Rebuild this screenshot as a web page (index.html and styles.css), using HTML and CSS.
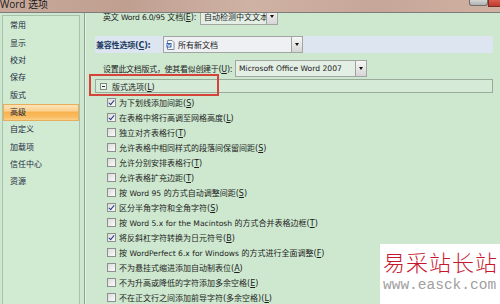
FILE: index.html
```html
<!DOCTYPE html>
<html lang="en">
<head>
    <meta charset="UTF-8">
    <title>Word 选项</title>
    <link rel="stylesheet" href="styles.css">
</head>
<body>
    <div class="window">
        <div class="titlebar">
            <span class="title">Word 选项</span>
            <div class="caption-btns">
                <span class="help-btn"></span>
                <span class="close-btn"></span>
            </div>
        </div>

        <div class="body">
            <ul class="nav">
                <li>常用</li>
                <li>显示</li>
                <li>校对</li>
                <li>保存</li>
                <li>版式</li>
                <li class="active">高级</li>
                <li>自定义</li>
                <li>加载项</li>
                <li>信任中心</li>
                <li>资源</li>
            </ul>

            <div class="main">
                <div class="row row-clip">
                    <span class="label">英文 <span class="en">Word 6.0/95</span> 文档(<u>E</u>):</span>
                    <div class="combo combo-short">
                        <span class="value">自动检测中文文本</span>
                        <span class="drop"></span>
                    </div>
                </div>

                <div class="row band">
                    <span class="label">兼容性选项(<u>C</u>):</span>
                    <div class="combo combo-doc">
                        <svg class="doc-icon" width="9" height="10" viewBox="0 0 9 10">
                            <path d="M1.5 0.5 H6 L8 2.5 V9.5 H1.5 Z" fill="#fdfdfd" stroke="#7b8799"/>
                            <rect x="0.5" y="3" width="5" height="4.5" fill="#2f5fae"/>
                            <path d="M1.5 4 L2.3 6.6 L3 4.8 L3.7 6.6 L4.5 4" stroke="#fff" stroke-width="0.7" fill="none"/>
                        </svg>
                        <span class="value">所有新文档</span>
                        <span class="drop"></span>
                    </div>
                </div>

                <div class="row row-set">
                    <span class="label">设置此文档版式，使其看似创建于(<u>U</u>):</span>
                    <div class="combo combo-wide">
                        <span class="value en">Microsoft Office Word 2007</span>
                        <span class="drop"></span>
                    </div>
                </div>

                <div class="section">
                    <span class="collapse"></span>
                    <span>版式选项(<u>L</u>)</span>
                </div>

                <ul class="checks">
                    <li><span class="box on"></span><span>为下划线添加间距(<u>S</u>)</span></li>
                    <li><span class="box on"></span><span>在表格中将行高调至网格高度(<u>L</u>)</span></li>
                    <li><span class="box"></span><span>独立对齐表格行(<u>T</u>)</span></li>
                    <li><span class="box"></span><span>允许表格中相同样式的段落间保留间距(<u>S</u>)</span></li>
                    <li><span class="box"></span><span>允许分别安排表格行(<u>T</u>)</span></li>
                    <li><span class="box"></span><span>允许表格扩充边距(<u>T</u>)</span></li>
                    <li><span class="box"></span><span>按 <span class="en">Word 95</span> 的方式自动调整间距(<u>S</u>)</span></li>
                    <li><span class="box on"></span><span>区分半角字符和全角字符(<u>S</u>)</span></li>
                    <li><span class="box"></span><span>按 <span class="en">Word 5.x for the Macintosh</span> 的方式合并表格边框(<u>T</u>)</span></li>
                    <li><span class="box on"></span><span>将反斜杠字符转换为日元符号(<u>B</u>)</span></li>
                    <li><span class="box"></span><span>按 <span class="en">WordPerfect 6.x for Windows</span> 的方式进行全面调整(<u>F</u>)</span></li>
                    <li><span class="box"></span><span>不为悬挂式缩进添加自动制表位(<u>A</u>)</span></li>
                    <li><span class="box"></span><span>不为升高或降低的字符添加多余空格(<u>E</u>)</span></li>
                    <li><span class="box"></span><span>不在正文行之间添加前导字符(多余空格)(<u>L</u>)</span></li>
                </ul>
            </div>
        </div>

        <div class="highlight"></div>

        <div class="mark">
            <div class="mark-cn">易采站长站</div>
            <div class="mark-url">www.easck.com</div>
        </div>
    </div>
</body>
</html>
```

FILE: styles.css
```css
* { box-sizing: border-box; }
body { margin: 0; width: 500px; height: 304px; overflow: hidden; font-family: "DejaVu Sans", "Noto Sans CJK SC", sans-serif; font-size: 8px; color: #1d1d1d; background: #cde8cf; }
u { text-decoration-thickness: 1px; text-underline-offset: 1px; }
.en { font-size: 7.6px; }

.window { position: relative; width: 500px; height: 304px; display: flex; flex-direction: column; }

.titlebar { height: 13px; flex-shrink: 0; display: flex; justify-content: space-between; align-items: flex-start; border-bottom: 1px solid #7d7d7d; background: linear-gradient(90deg, #c8a99a, #c09f91 25%, #cfb2a4 50%, #c6a698 75%, #d0b0a1); }
.title { font-family: "Open Sans", "Noto Sans CJK SC", sans-serif; font-size: 10px; line-height: 8px; color: #1a1a1a; }
.caption-btns { display: flex; margin-right: -1px; }
.help-btn { width: 19px; height: 6px; border: 1px solid #6e6e6e; border-top: none; border-radius: 0 0 3px 3px; background: linear-gradient(#d4d4d4, #b2b2b2); }
.close-btn { width: 13px; height: 7px; border: 1px solid #7a3028; border-top: none; background: linear-gradient(#d95c4c, #c03a2c); }

.body { flex: 1; display: flex; min-height: 0; }

.nav { list-style: none; margin: 2px 0 0 2px; padding: 1.3px 0 0; width: 78px; border: 1px solid #a9c2ab; border-bottom: none; background: #d1ebd3; }
.nav li { height: 17.33px; line-height: 17.33px; padding-left: 7px; color: #1c2a3e; }
.nav li.active { background: linear-gradient(#fde3b6 0%, #fbd08e 40%, #f8b24c 48%, #f9bd62 80%, #fbd08a 100%); border: 1px solid #e6ad5c; line-height: 15.3px; padding-left: 6px; }

.main { flex: 1; margin-left: 4px; border-left: 1px solid #8fa292; box-shadow: inset 1px 0 #e3f2e4; overflow: hidden; padding: 0 7px 0 10px; display: flex; flex-direction: column; }

.row { display: flex; align-items: center; height: 17px; flex-shrink: 0; white-space: nowrap; }
.label { flex-shrink: 0; }
.row-clip { margin-top: -5px; padding-left: 8px; }
.row-clip .label { width: 97px; letter-spacing: -0.2px; }
.band { margin-top: 11px; padding-left: 1px; background: #dce5f0; }
.band .label { width: 67px; color: #213a63; font-weight: bold; letter-spacing: -0.2px; }
.row-set { margin-top: 7px; padding-left: 8px; }
.row-set .label { width: 132px; letter-spacing: -0.3px; }

.combo { height: 17px; display: flex; align-items: center; border: 1px solid #a2a6a2; background: #e3eee4; }
.combo .value { flex: 1; padding-left: 3px; overflow: hidden; }
.combo-short { width: 78px; }
.combo-doc { width: 140px; background: #eef0f3; padding-left: 2px; }
.combo-wide { width: 132px; }
.drop { width: 11px; height: 100%; flex-shrink: 0; display: flex; align-items: center; justify-content: center; border-left: 1px solid #9fa29f; background: linear-gradient(#f6f6f6, #d6d6d6); }
.drop::after { content: ""; border-left: 2.5px solid transparent; border-right: 2.5px solid transparent; border-top: 3px solid #111; }
.doc-icon { flex-shrink: 0; }

.section { margin-top: 2px; height: 14px; flex-shrink: 0; display: flex; align-items: center; gap: 5px; padding-left: 4px; border: 1px solid #9aab9c; background: #d5ebd7; }
.collapse { position: relative; width: 7px; height: 7px; border: 1px solid #7f8a80; background: #eef6ee; }
.collapse::after { content: ""; position: absolute; left: 1px; right: 1px; top: 2px; height: 1px; background: #333; }

.checks { list-style: none; margin: 2px 0 0; padding: 0 0 0 12px; }
.checks li { height: 15px; display: flex; align-items: center; white-space: nowrap; }
.box { width: 9px; height: 9px; flex-shrink: 0; margin-right: 3px; border: 1px solid #8e9090; background: linear-gradient(135deg, #d9dbd9, #fbfbfb); }
.box.on { position: relative; }
.box.on::after { content: ""; position: absolute; left: 2px; top: 0; width: 2px; height: 5px; border: solid #243a86; border-width: 0 1.4px 1.4px 0; transform: rotate(40deg); }

.highlight { position: absolute; left: 89px; top: 74px; width: 130px; height: 22px; border: 2px solid #d6433a; }

.mark { position: absolute; left: 380px; top: 244px; width: 120px; height: 60px; background: #fff; padding: 4px 0 0 3px; }
.mark-cn { font-family: "Noto Sans CJK SC", sans-serif; font-size: 22px; font-weight: 300; line-height: 26px; letter-spacing: 1px; color: #c8162e; }
.mark-url { font-family: "Liberation Mono", monospace; font-size: 14.5px; line-height: 18px; color: #a0a0a0; margin-top: 2px; }
```
